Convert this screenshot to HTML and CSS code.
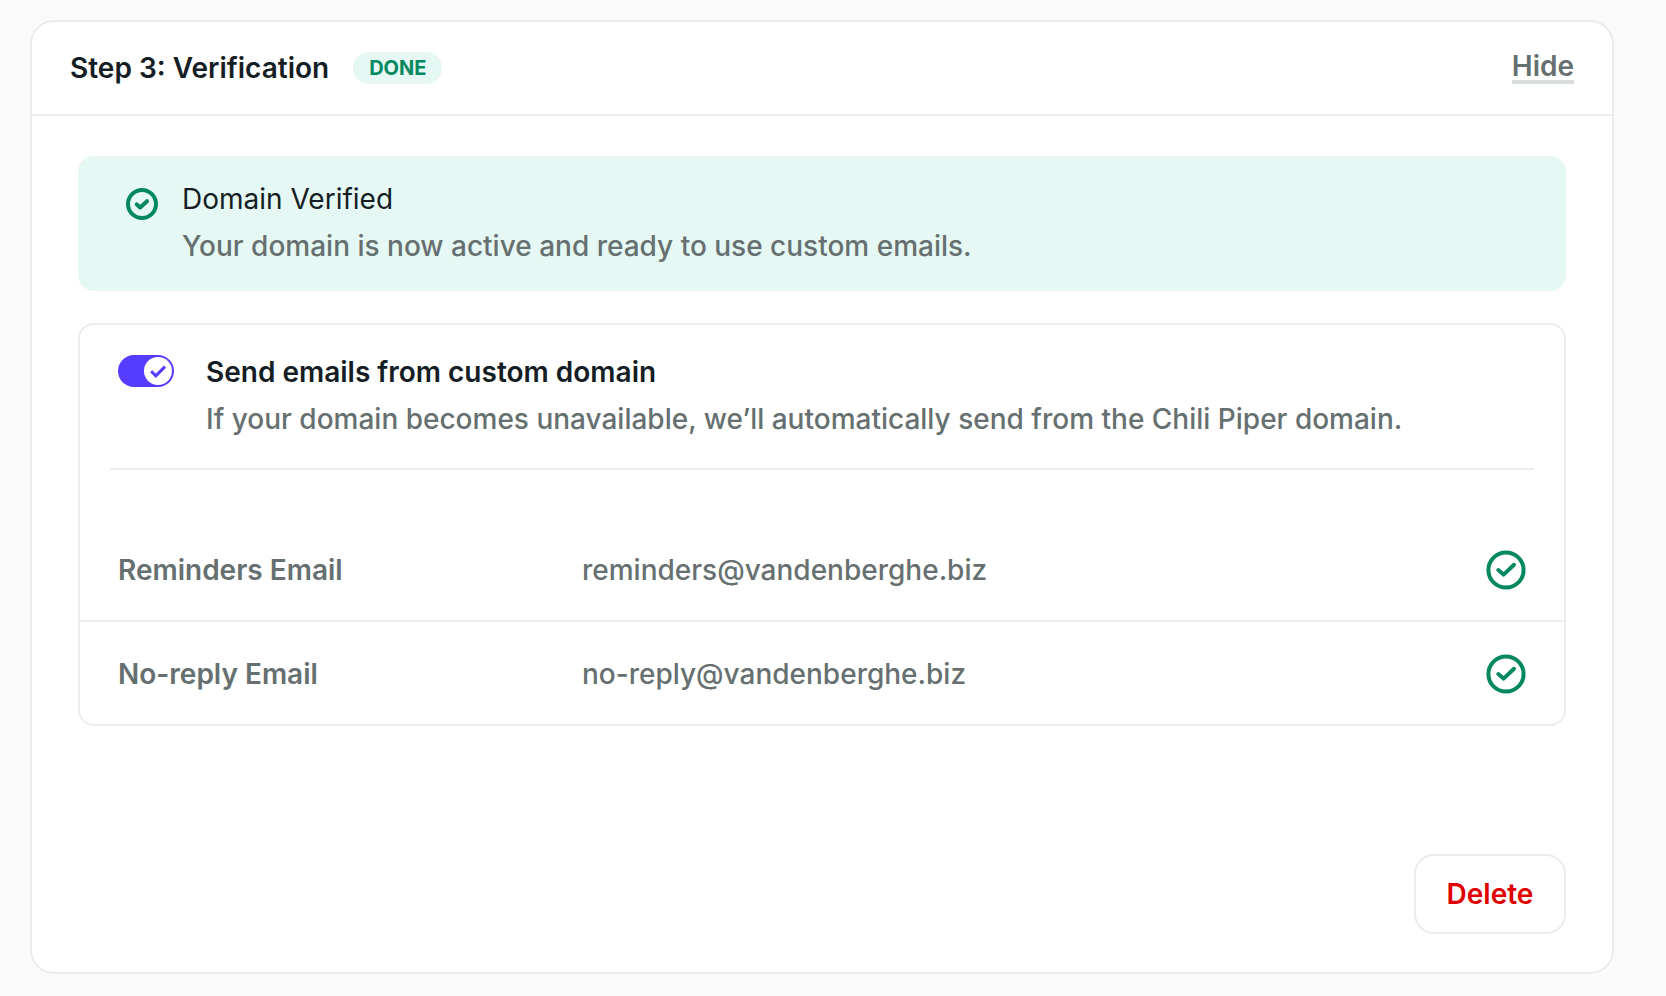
FILE: index.html
```html
<!DOCTYPE html>
<html lang="en">
<head>
    <meta charset="UTF-8">
    <meta name="viewport" content="width=device-width, initial-scale=1.0">
    <title>Custom domain - Verification</title>
    <link rel="stylesheet" href="styles.css">
</head>
<body>
    <main class="card">
        <header class="card-header">
            <h2 class="card-title">Step 3: Verification</h2>
            <span class="badge">DONE</span>
            <a href="#verification" class="hide-link">Hide</a>
        </header>

        <div class="card-body" id="verification">
            <div class="alert">
                <svg class="alert-icon" viewBox="0 0 32 32" aria-hidden="true">
                    <circle cx="16" cy="16" r="14"/>
                    <path d="M10.8 16.4 L14.2 19.4 L21 13.2"/>
                </svg>
                <div class="text">
                    <p>Domain Verified</p>
                    <p class="muted">Your domain is now active and ready to use custom emails.</p>
                </div>
            </div>

            <section class="panel">
                <div class="panel-top">
                    <span class="switch">
                        <input type="checkbox" id="custom-domain" aria-describedby="domain-note" checked>
                        <svg class="switch-knob" viewBox="0 0 28 28" aria-hidden="true">
                            <circle cx="14" cy="14" r="14"/>
                            <path d="M7.2 14.2 L11.8 18.8 L21 9.6"/>
                        </svg>
                    </span>
                    <div class="text">
                        <label class="switch-label" for="custom-domain">Send emails from custom domain</label>
                        <p class="muted" id="domain-note">If your domain becomes unavailable, we’ll automatically send from the Chili Piper domain.</p>
                    </div>
                </div>

                <table class="emails">
                    <tr>
                        <th scope="row">Reminders Email</th>
                        <td>reminders@vandenberghe.biz</td>
                        <td class="status">
                            <svg viewBox="0 0 40 40" role="img" aria-label="Verified">
                                <circle cx="20" cy="20" r="17.6"/>
                                <path d="M12.3 20 L17.6 24.6 L28 14.8"/>
                            </svg>
                        </td>
                    </tr>
                    <tr>
                        <th scope="row">No-reply Email</th>
                        <td>no-reply@vandenberghe.biz</td>
                        <td class="status">
                            <svg viewBox="0 0 40 40" role="img" aria-label="Verified">
                                <circle cx="20" cy="20" r="17.6"/>
                                <path d="M12.3 20 L17.6 24.6 L28 14.8"/>
                            </svg>
                        </td>
                    </tr>
                </table>
            </section>

            <div class="actions">
                <button type="button" class="delete-btn">Delete</button>
            </div>
        </div>
    </main>
</body>
</html>
```
FILE: styles.css
```css
* {
    box-sizing: border-box;
}
body {
    margin: 0;
    padding: 20px 52px 20px 30px;
    background-color: #fafafa;
    color: #151e24;
    font-family: Inter, sans-serif;
    font-size: 28px;
    line-height: 40px;
}
h2, p {
    margin: 0;
}
.card {
    background-color: white;
    border: 2px solid #ececec;
    border-radius: 24px;
}
.card-header {
    display: flex;
    align-items: center;
    padding: 26px 38px;
    border-bottom: 2px solid #ececec;
}
.card-title {
    font-size: 28px;
    font-weight: 600;
}
.badge {
    margin-left: 24px;
    padding: 0 16px;
    border-radius: 16px;
    background-color: #e5f8f4;
    color: #048860;
    font-size: 20px;
    font-weight: 700;
    line-height: 32px;
}
.hide-link {
    margin-left: auto;
    border-bottom: 4px solid #dadddd;
    color: #667070;
    font-weight: 600;
    line-height: 28px;
    text-decoration: none;
}
.card-body {
    padding: 40px 46px 38px;
}
.text {
    display: flex;
    flex-direction: column;
    gap: 7px;
}
.muted {
    color: #667070;
    font-weight: 500;
}
.alert {
    display: flex;
    gap: 24px;
    padding: 23px 48px 25px;
    border-radius: 16px;
    background-color: #e5f8f4;
}
.alert-icon {
    flex: none;
    width: 32px;
    height: 32px;
    margin-top: 9px;
    fill: none;
    stroke: #048860;
    stroke-width: 4;
    stroke-linecap: round;
    stroke-linejoin: round;
}
.panel {
    margin-top: 32px;
    border: 2px solid #ececec;
    border-radius: 16px;
}
.panel-top {
    display: flex;
    gap: 32px;
    margin: 0 30px;
    padding: 27px 8px 29px;
    border-bottom: 2px solid #ececec;
}
.switch {
    position: relative;
    flex: none;
    width: 56px;
    height: 32px;
    margin-top: 3px;
}
.switch input {
    display: block;
    appearance: none;
    width: 100%;
    height: 100%;
    margin: 0;
    border-radius: 16px;
    background-color: #aab0b0;
    cursor: pointer;
}
.switch input:checked {
    background-color: #553cff;
}
.switch-knob {
    position: absolute;
    top: 2px;
    right: 2px;
    width: 28px;
    height: 28px;
    pointer-events: none;
}
.switch-knob circle {
    fill: white;
}
.switch-knob path {
    fill: none;
    stroke: #553cff;
    stroke-width: 3;
}
.switch-label {
    font-weight: 600;
    cursor: pointer;
}
.emails {
    width: 100%;
    margin-top: 48px;
    border-spacing: 0;
    table-layout: fixed;
}
.emails th,
.emails td {
    padding: 32px 0 30px;
    text-align: left;
    font-weight: 500;
    color: #667070;
}
.emails th {
    width: 502px;
    padding-left: 38px;
    font-weight: 600;
}
.emails tr + tr > * {
    border-top: 2px solid #ececec;
}
.emails .status {
    width: 120px;
    padding-right: 38px;
}
.status svg {
    display: block;
    width: 40px;
    height: 40px;
    margin-left: auto;
    fill: none;
    stroke: #048860;
    stroke-width: 4;
    stroke-linecap: round;
    stroke-linejoin: round;
}
.actions {
    display: flex;
    justify-content: flex-end;
    margin-top: 128px;
}
.delete-btn {
    min-width: 152px;
    padding: 18px 30px;
    border: 2px solid #ececec;
    border-radius: 20px;
    background-color: white;
    color: #e00000;
    font: inherit;
    font-weight: 600;
    cursor: pointer;
}
```
